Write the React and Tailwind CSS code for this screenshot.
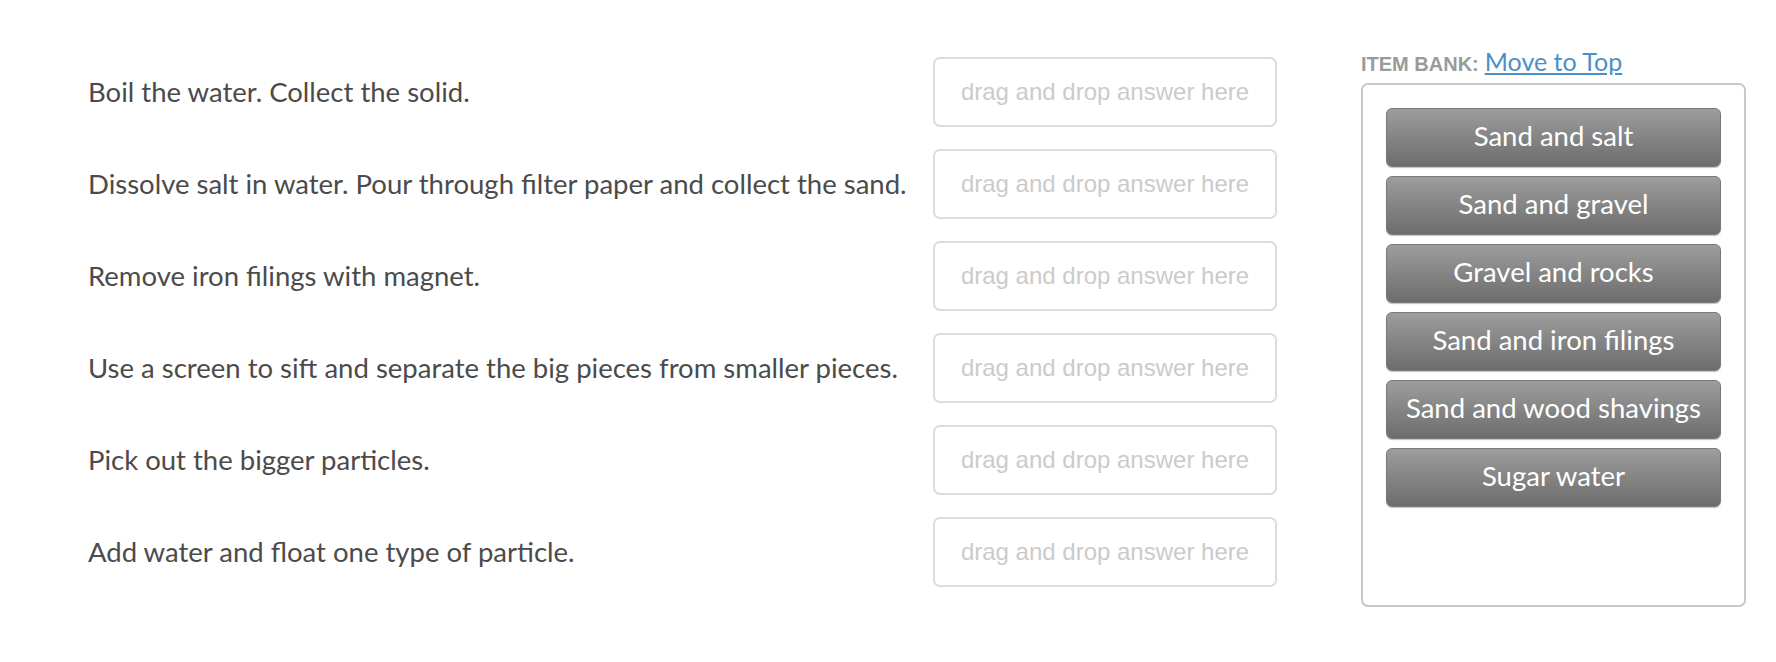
const STEPS = [
  'Boil the water. Collect the solid.',
  'Dissolve salt in water. Pour through filter paper and collect the sand.',
  'Remove iron filings with magnet.',
  'Use a screen to sift and separate the big pieces from smaller pieces.',
  'Pick out the bigger particles.',
  'Add water and float one type of particle.',
];

const BANK = [
  'Sand and salt',
  'Sand and gravel',
  'Gravel and rocks',
  'Sand and iron filings',
  'Sand and wood shavings',
  'Sugar water',
];

const App = () => {
  return (
    <div className="min-h-[662px] w-[1776px] bg-white flex items-start pl-[88px] pt-[57px]" style={{ fontFamily: 'Lato, "Noto Sans", sans-serif' }}>
      {/* matching rows */}
      <div className="grid grid-cols-[845px_344px] gap-y-[22px]">
        {STEPS.map(step => (
          <div key={step} className="contents">
            <div className="flex items-center h-[70px] text-[27.5px] text-[#4b4b4b]">{step}</div>
            <div className="flex items-center justify-center h-[70px] rounded-[7px] border-2 border-[#dcdcdc] text-[24px] text-[#cbcbcb]"
              style={{ fontFamily: '"Liberation Sans", Arial, sans-serif' }}>
              drag and drop answer here
            </div>
          </div>
        ))}
      </div>

      {/* item bank */}
      <div className="ml-[84px] -mt-[14px] w-[385px]">
        <div className="flex items-baseline gap-[6px] h-[40px]">
          <span className="text-[20px] font-bold text-[#9a9a9a]" style={{ fontFamily: '"Liberation Sans", Arial, sans-serif' }}>ITEM BANK:</span>
          <a href="#" className="text-[25px] text-[#4a8fc8] underline">Move to Top</a>
        </div>
        <div className="h-[524px] rounded-[7px] border-2 border-[#c8c8c8] px-[23px] pt-[23px] flex flex-col gap-[9px]">
          {BANK.map(item => (
            <div key={item}
              className="h-[59px] flex items-center justify-center pb-[3px] rounded-[6px] border border-[#7a7a7a] bg-gradient-to-b from-[#9d9d9d] to-[#6d6d6d] text-white text-[27.5px] shadow-[0_1px_1px_rgba(0,0,0,0.25)]">
              {item}
            </div>
          ))}
        </div>
      </div>
    </div>
  );
};

export default App;
